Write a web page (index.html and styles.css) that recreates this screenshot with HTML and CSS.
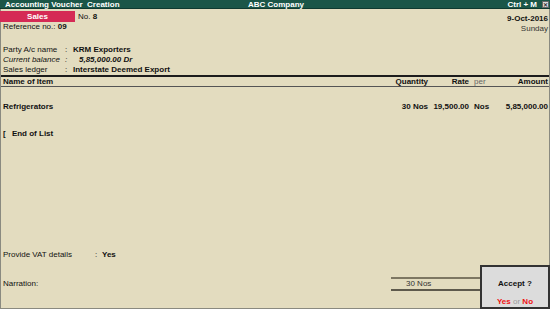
FILE: index.html
```html
<!DOCTYPE html>
<html>
<head>
  <title>Accounting Voucher Creation</title>
  <meta charset="UTF-8">
  <link rel="stylesheet" href="styles.css">
</head>
<body>
  <div class="screen">
    <!-- 상단 타이틀 바 -->
    <div class="titlebar">
      <span class="tb-left">Accounting Voucher&nbsp; Creation</span>
      <span class="tb-center">ABC Company</span>
      <span class="tb-right">Ctrl + M <span class="tb-close">&#x2715;</span></span>
    </div>

    <div class="voucher">
      <div class="vhead">
        <div>
          <div class="vtype-row">
            <span class="vtype">Sales</span>
            <span class="vno">No. <b>8</b></span>
          </div>
          <div class="ref">Reference no.: <b>09</b></div>
        </div>
        <div class="vdate">
          <div class="date">9-Oct-2016</div>
          <div class="day">Sunday</div>
        </div>
      </div>

      <div class="party">
        <span>Party A/c name</span><span>:</span><b>KRM Exporters</b>
        <i>Current balance</i><i>:</i><b class="bal">5,85,000.00 Dr</b>
        <span>Sales ledger</span><span>:</span><b>Interstate Deemed Export</b>
      </div>

      <div class="cols">
        <span>Name of Item</span>
        <span class="num">Quantity</span>
        <span class="num">Rate</span>
        <span class="per light">per</span>
        <span class="num">Amount</span>
      </div>

      <div class="item-row">
        <span>Refrigerators</span>
        <span class="num">30 Nos</span>
        <span class="num">19,500.00</span>
        <span class="per">Nos</span>
        <span class="num">5,85,000.00</span>
      </div>

      <div class="end-list"><span class="cursor">[</span> End of List</div>

      <div class="spacer"></div>

      <div class="vat">
        <span class="vat-label">Provide VAT details</span>
        <span>:</span>
        <b>Yes</b>
      </div>

      <div class="narr">
        <span>Narration:</span>
        <div class="narr-box">30 Nos</div>
      </div>
    </div>

    <!-- 저장 확인 창 -->
    <div class="accept">
      <div class="accept-q">Accept ?</div>
      <div class="accept-a"><span class="red">Yes</span> <span class="or">or</span> <span class="red">No</span></div>
    </div>
  </div>
</body>
</html>
```

FILE: styles.css
```css
* {
  box-sizing: border-box;
}
body {
  margin: 0;
  font-family: 'Liberation Sans', Arial, sans-serif;
  font-size: 8px;
  color: #111;
  background-color: #e3dcbf;
}
.screen {
  position: relative;
  width: 550px;
  height: 309px;
  display: flex;
  flex-direction: column;
  background-color: #e3dcbf;
}
.titlebar {
  height: 9px;
  display: grid;
  grid-template-columns: 1fr auto 1fr;
  align-items: center;
  background-color: #1b5648;
  color: #fff;
  font-weight: bold;
  line-height: 9px;
  padding: 0 1px 0 5px;
  border-bottom: 1px solid #0f3a30;
}
.tb-center {
  margin-left: -2px;
}
.tb-right {
  display: flex;
  align-items: center;
  justify-content: flex-end;
  gap: 5px;
}
.tb-close {
  display: inline-block;
  width: 7px;
  height: 7px;
  font-size: 6px;
  line-height: 6px;
  text-align: center;
  background-color: #d9d9d9;
  color: #333;
  border: 1px solid #666;
}
.voucher {
  flex: 1;
  display: flex;
  flex-direction: column;
  border: 1px solid #8a8a80;
  border-top: none;
  line-height: 10px;
}
.vhead {
  display: flex;
  justify-content: space-between;
  margin-top: 2px;
  padding-right: 1px;
}
.vtype-row {
  display: flex;
  align-items: center;
  height: 11px;
}
.vtype {
  width: 75px;
  margin-left: -1px;
  height: 11px;
  line-height: 11px;
  text-align: center;
  font-weight: bold;
  color: #fff;
  background-color: #d52a55;
}
.vno {
  margin-left: 3px;
}
.ref {
  padding-left: 2px;
}
.vdate {
  text-align: right;
  padding-top: 3px;
}
.date {
  font-weight: bold;
}
.day {
  color: #333;
}
.party {
  display: grid;
  grid-template-columns: 62px 8px 1fr;
  margin-top: 11px;
  padding-left: 2px;
}
.party .bal {
  font-style: italic;
  padding-left: 6px;
}
.cols,
.item-row {
  display: grid;
  grid-template-columns: 1fr 59px 41px 31px 48px;
  padding: 0 1px 0 2px;
}
.cols {
  font-weight: bold;
  line-height: 9px;
  border-top: 2px solid #1c1c1c;
  border-bottom: 1px solid #555;
}
.item-row {
  font-weight: bold;
  margin-top: 15px;
}
.num {
  text-align: right;
}
.per {
  padding-left: 5px;
}
.light {
  font-weight: normal;
  color: #666;
}
.end-list {
  font-weight: bold;
  margin-top: 17px;
  padding-left: 2px;
}
.cursor {
  margin-right: 4px;
}
.spacer {
  flex: 1;
}
.vat {
  display: flex;
  padding-left: 2px;
}
.vat-label {
  width: 92px;
}
.vat span + span {
  width: 7px;
}
.narr {
  display: flex;
  align-items: center;
  justify-content: space-between;
  margin-top: 17px;
  margin-bottom: 17px;
  padding-left: 2px;
}
.narr-box {
  width: 90px;
  margin-right: 68px;
  border-top: 2px solid #7d7762;
  border-bottom: 2px solid #5e5a4c;
  padding: 1px 0 1px 15px;
  line-height: 8px;
  color: #333;
}
.accept {
  position: absolute;
  right: 0;
  bottom: 0;
  width: 70px;
  height: 44px;
  background-color: #dcdcdc;
  border: 2px solid #333;
  text-align: center;
  display: flex;
  flex-direction: column;
  justify-content: space-between;
  padding: 12px 0 1px;
}
.accept-q {
  font-weight: bold;
}
.accept-a {
  font-weight: bold;
}
.red {
  color: #f01010;
}
.or {
  color: #999;
  font-weight: normal;
}
```
